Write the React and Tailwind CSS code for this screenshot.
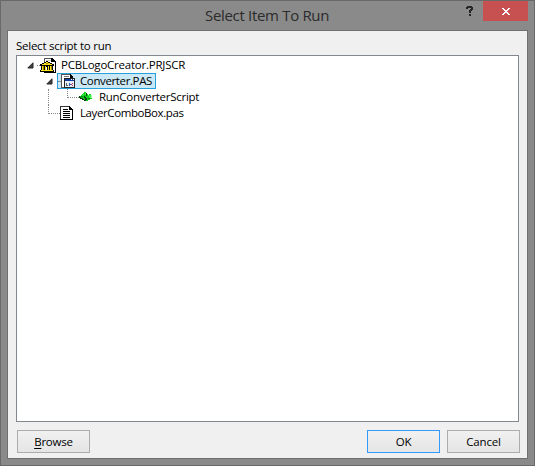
const font = 'font-["Open_Sans","Noto_Sans",sans-serif]';

function Expander() {
  return (
    <svg width="7" height="7" viewBox="0 0 7 7" className="shrink-0">
      <path d="M6 .8V6H.8Z" fill="#404040" stroke="#262626" strokeWidth="1" />
    </svg>
  );
}

function ProjectIcon() {
  return (
    <svg width="16" height="16" viewBox="0 0 16 16" shapeRendering="crispEdges" className="shrink-0">
      <path d="M4 1H12L15 4V16H4Z" fill="#fff" />
      <path d="M4 1H12V2H5V5H4Z" fill="#555" />
      <path d="M6 3H11V4H6Z" fill="#ccc" />
      <path d="M11 1H13V2H14V3H15V4H16V16H4V15H15V5H11Z" fill="#000" />
      <path d="M6 4H8V5H10V6H12V7H14V9H13V13H14V15H0V13H1V9H0V7H2V6H4V5H6Z" fill="#000" />
      <path d="M6 5H8V6H10V7H12V8H2V7H4V6H6Z" fill="#ffdf20" />
      <path d="M2 9H4V13H2ZM5 9H6V13H5ZM8 9H9V13H8ZM10 9H12V13H10ZM1 13H13V14H1Z" fill="#ffe51c" />
      <path d="M6 6H8V7H6ZM3 9H4V13H3ZM11 9H12V13H11Z" fill="#a38c00" />
      <path d="M6 10H7V13H6Z" fill="#fff" />
    </svg>
  );
}

function FormIcon() {
  return (
    <svg width="16" height="16" viewBox="0 0 16 16" shapeRendering="crispEdges" className="shrink-0">
      <path d="M2 1H10L13 4V14H2Z" fill="#fff" />
      <path d="M1 1H10V2H2V14H4V15H1Z" fill="#555" />
      <path d="M10 1H11V2H12V3H13V5H10Z" fill="#000" />
      <path d="M4 3H9V4H4Z" fill="#777" />
      <path d="M4 5H15V15H4Z" fill="#222" />
      <path d="M5 6H14V8H5Z" fill="#123e9e" />
      <path d="M11 6H12V7H11ZM13 6H14V7H13Z" fill="#fff" />
      <path d="M5 8H14V14H5Z" fill="#e7edf4" />
      <path d="M6 10H7V13H6ZM7 12H8V13H7Z" fill="#55616c" />
      <path d="M9 10H10V13H9ZM10 11H11V12H10Z" fill="#2754b3" />
      <path d="M12 10H13V11H12ZM11 11H12V12H11ZM12 12H13V13H12Z" fill="#b63c68" />
    </svg>
  );
}

function RoutineIcon() {
  return (
    <svg width="13" height="10" viewBox="0 0 13 10" shapeRendering="crispEdges" className="shrink-0">
      <path d="M5 0H7V1H8V2H9V3H10V2H12V3H13V7H11V8H9V9H6V8H4V7H2V6H0V4H2V3H3V2H4V1H5Z" fill="#10cf1f" />
      <path d="M4 2H5V3H4ZM3 3H4V4H3ZM6 1H7V3H6ZM9 3H12V6H10V4H9Z" fill="#38f443" />
      <path d="M0 4H1V5H2V6H4V7H5V8H7V9H5V8H3V7H1V6H0ZM5 4H6V5H7V6H8V8H6V6H5ZM7 1H8V4H7Z" fill="#07410a" />
      <path d="M2 4H4V5H2ZM9 6H11V7H9Z" fill="#087b20" />
      <path d="M12 3H13V6H12Z" fill="#a9f7ae" />
    </svg>
  );
}

function DocumentIcon() {
  return (
    <svg width="13" height="14" viewBox="0 0 13 14" shapeRendering="crispEdges" className="shrink-0">
      <path d="M1 1H10L12 4V13H1Z" fill="#fff" />
      <path d="M0 0H10V1H1V14H0Z" fill="#333" />
      <path d="M9 0H10V1H11V2H12V3H13V14H0V13H12V4H9Z" fill="#000" />
      <path d="M3 3H8V4H3ZM3 5H10V6H3ZM3 7H10V8H3ZM3 9H10V10H3ZM3 11H10V12H3Z" fill="#000" />
    </svg>
  );
}

function PushButton({ children, primary }) {
  return (
    <button
      className={`flex h-[23px] w-[73px] items-center justify-center border bg-linear-to-b from-[#f0f0f0] to-[#e5e5e5] leading-none tracking-[-0.2px] ${
        primary ? "border-[#3399ff]" : "border-[#acacac]"
      }`}
    >
      {children}
    </button>
  );
}

export default function App() {
  return (
    <div className={`flex h-[466px] w-[535px] flex-col border border-[#696969] bg-[#8a8a8a] text-[11.5px] text-black ${font}`}>
      <header className="flex h-[29px] shrink-0">
        <div className="w-[204px]" />
        <h1 className="w-[251px] pt-[4px] text-[15px] leading-[20px] tracking-[-0.32px] whitespace-nowrap text-[#2b2b2b]">
          Select Item To Run
        </h1>
        <button className="flex h-5 w-[27px] justify-center pt-[5px]" aria-label="Help">
          <svg width="7" height="10" viewBox="0 0 7 10" shapeRendering="crispEdges">
            <path d="M1 0H6V1H7V4H6V5H5V7H3V4H4V3H5V2H2V3H0V1H1ZM3 8H5V10H3Z" fill="#262626" />
          </svg>
        </button>
        <button className="flex h-5 w-[45px] items-center justify-center bg-[#c75050]" aria-label="Close">
          <svg width="8" height="7" viewBox="0 0 8 7" shapeRendering="crispEdges">
            <path d="M0 0H2V1H3V2H5V1H6V0H8V1H7V2H6V3H5V4H6V5H7V6H8V7H6V6H5V5H3V6H2V7H0V6H1V5H2V4H3V3H2V2H1V1H0Z" fill="#fff" />
          </svg>
        </button>
      </header>
      <main className="mx-[6px] flex h-[429px] shrink-0 flex-col border border-[#707070] bg-[#f0f0f0] px-2">
        <div className="h-6 pt-[7px] leading-[16px] tracking-[-0.25px]">Select script to run</div>
        <div className="h-[367px] w-[503px] shrink-0 border border-[#828790] bg-white pt-px">
          <div className="flex h-4 items-center pl-[10px]">
            <Expander />
            <div className="ml-[3px] w-[3px] border-t border-dotted border-[#888]" />
            <ProjectIcon />
            <span className="ml-[5px] leading-none tracking-[-0.23px]">PCBLogoCreator.PRJSCR</span>
          </div>
          <div className="flex h-4 items-center pl-[29px]">
            <Expander />
            <div className="ml-[3px] w-px" />
            <div className="flex h-4 w-[99px] items-center border border-[#26a0da] bg-[#cbe8f6]">
              <div className="w-[2px] border-t border-dotted border-[#888]" />
              <FormIcon />
              <span className="ml-1 leading-none tracking-[-0.38px]">Converter.PAS</span>
            </div>
          </div>
          <div className="flex h-4 pl-[31px]">
            <div className="w-[19px] border-l border-dotted border-[#888]" />
            <div className="h-[9px] w-[12px] border-b border-l border-dotted border-[#888]" />
            <div className="flex items-center">
              <RoutineIcon />
              <span className="ml-[7px] leading-none tracking-[-0.28px]">RunConverterScript</span>
            </div>
          </div>
          <div className="flex h-4 pl-[31px]">
            <div className="h-[9px] w-[12px] border-b border-l border-dotted border-[#888]" />
            <div className="flex items-center">
              <DocumentIcon />
              <span className="ml-[7px] leading-none tracking-[-0.4px]">LayerComboBox.pas</span>
            </div>
          </div>
        </div>
        <footer className="mt-2 flex w-[504px] pl-px">
          <PushButton>
            <span><span className="underline underline-offset-2">B</span>rowse</span>
          </PushButton>
          <div className="ml-auto flex gap-[7px]">
            <PushButton primary>OK</PushButton>
            <PushButton>Cancel</PushButton>
          </div>
        </footer>
      </main>
    </div>
  );
}
